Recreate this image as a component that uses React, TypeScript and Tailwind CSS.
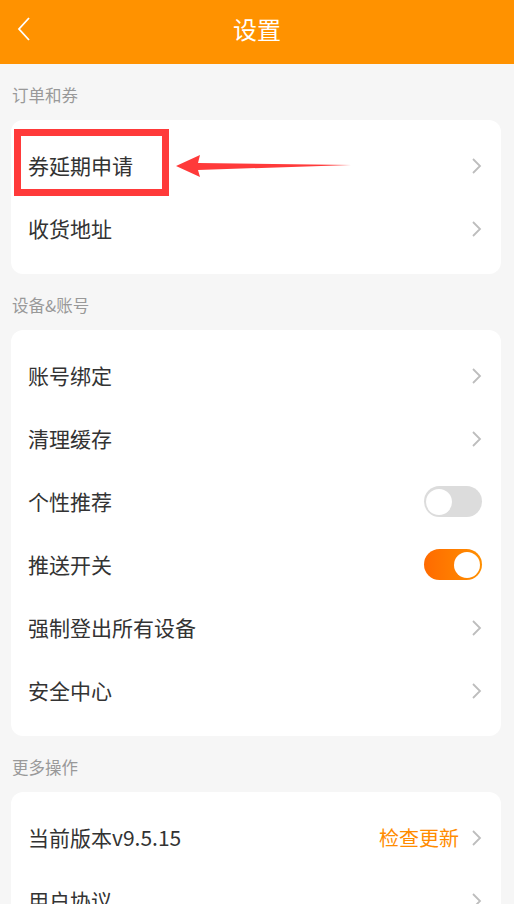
import React from 'react';

const Chevron = () => (
  <svg width="11" height="20" viewBox="0 0 11 20" className="shrink-0">
    <path d="M2 3 L9 10 L2 17" fill="none" stroke="#bdbdbd" strokeWidth="1.8" />
  </svg>
);

const Toggle = ({ on }: { on: boolean }) =>
  on ? (
    <div className="w-[58px] h-[31px] rounded-full bg-gradient-to-r from-[#ff6a00] to-[#ff8f00] flex items-center justify-end pr-[2px]">
      <div className="w-[26px] h-[26px] rounded-full bg-white" />
    </div>
  ) : (
    <div className="w-[58px] h-[31px] rounded-full bg-[#dcdcdc] flex items-center pl-[2px]">
      <div className="w-[26px] h-[26px] rounded-full bg-white" />
    </div>
  );

type Row = { label: string; right?: React.ReactNode; toggle?: boolean; on?: boolean };

const Card = ({ rows, children }: { rows: Row[]; children?: React.ReactNode }) => (
  <div className="relative ml-[11px] mr-[13px] bg-white rounded-[12px] py-[14px]">
    {rows.map((r) => (
      <div key={r.label} className="h-[63px] flex items-center justify-between pl-[17px] pr-[19px]">
        <span className="text-[21px] text-[#333]">{r.label}</span>
        {r.toggle ? (
          <Toggle on={!!r.on} />
        ) : (
          <div className="flex items-center gap-[12px]">
            {r.right}
            <Chevron />
          </div>
        )}
      </div>
    ))}
    {children}
  </div>
);

const Label = ({ text }: { text: string }) => (
  <div className="h-[56px] pl-[12px] pt-[23px] text-[16.5px] text-[#999] leading-none">{text}</div>
);

export default function App() {
  return (
    <div
      className="w-[514px] h-[904px] overflow-hidden bg-[#f6f6f6]"
      style={{ fontFamily: '"Noto Sans CJK SC", "Noto Sans", sans-serif' }}
    >
      {/* header */}
      <div className="relative h-[64px] bg-[#ff9200] flex items-center justify-center">
        <svg width="14" height="24" viewBox="0 0 14 24" className="absolute left-[17px] top-[17px]">
          <path d="M12 1 L2 12 L12 23" fill="none" stroke="#fff" strokeWidth="1.8" />
        </svg>
        <span className="text-white text-[24px] -mt-[6px]">设置</span>
      </div>

      <Label text="订单和券" />
      <Card rows={[{ label: '券延期申请' }, { label: '收货地址' }]}>
        {/* annotation box */}
        <div className="absolute left-[3px] top-[9px] w-[155px] h-[67px] border-[7px] border-[#ff3a3a]" />
        <svg width="180" height="30" viewBox="0 0 180 30" className="absolute left-[165px] top-[31px]">
          <polygon points="0,15 24,4 22,12 175,14 22,19 24,26" fill="#ff3a3a" />
        </svg>
      </Card>

      <Label text="设备&账号" />
      <Card
        rows={[
          { label: '账号绑定' },
          { label: '清理缓存' },
          { label: '个性推荐', toggle: true, on: false },
          { label: '推送开关', toggle: true, on: true },
          { label: '强制登出所有设备' },
          { label: '安全中心' },
        ]}
      />

      <Label text="更多操作" />
      <Card
        rows={[
          { label: '当前版本v9.5.15', right: <span className="text-[20px] text-[#ff8c00]">检查更新</span> },
          { label: '用户协议' },
        ]}
      />
    </div>
  );
}
